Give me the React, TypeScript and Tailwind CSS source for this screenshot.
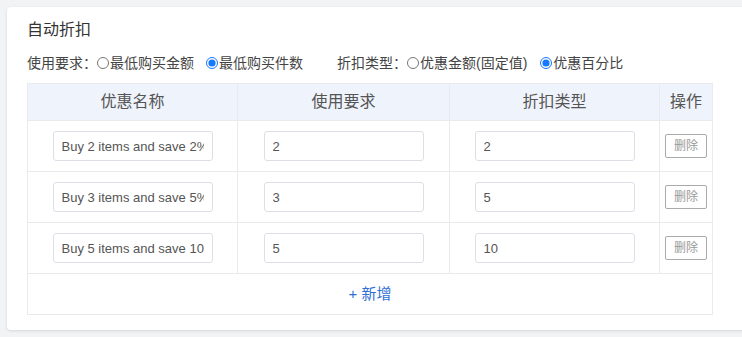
import React, { useState } from "react";

interface Rule {
  name: string;
  need: string;
  value: string;
}

const FONT = "font-['Liberation_Sans','Noto_Sans_CJK_SC',sans-serif]";

function Radio({
  checked,
  label,
  onClick,
}: {
  checked: boolean;
  label: string;
  onClick: () => void;
}) {
  return (
    <label className="flex items-center cursor-pointer" onClick={onClick}>
      <input
        type="radio"
        checked={checked}
        readOnly
        className="m-0 mr-px h-[12px] w-[12px] accent-[#1677ff]"
      />
      <span>{label}</span>
    </label>
  );
}

export default function App() {
  const [requireType, setRequireType] = useState("count");
  const [discountType, setDiscountType] = useState("percent");
  const [rules] = useState<Rule[]>([
    { name: "Buy 2 items and save 2%", need: "2", value: "2" },
    { name: "Buy 3 items and save 5%", need: "3", value: "5" },
    { name: "Buy 5 items and save 10%", need: "5", value: "10" },
  ]);

  const inputCls =
    "h-[30px] w-[160px] rounded-[3px] border border-[#dcdfe6] bg-white px-[8px] text-[13px] text-[#555] outline-none";

  return (
    <div
      className={`h-[337px] w-[742px] overflow-hidden bg-[#f2f3f5] pl-[7px] pt-[7px] ${FONT}`}
    >
      <div className="w-[760px] rounded-[4px] bg-white pb-[15px] pl-[20px] pt-[11px] shadow-[0_1px_3px_rgba(0,0,0,0.12)]">
        <h2 className="text-[16px] leading-[24px] text-[#333]">自动折扣</h2>

        <div className="mt-[11px] flex h-[20px] items-center text-[14px] text-[#444]">
          <span>使用要求：</span>
          <Radio
            checked={requireType === "amount"}
            label="最低购买金额"
            onClick={() => setRequireType("amount")}
          />
          <span className="w-[12px]" />
          <Radio
            checked={requireType === "count"}
            label="最低购买件数"
            onClick={() => setRequireType("count")}
          />
          <span className="ml-[34px]">折扣类型：</span>
          <Radio
            checked={discountType === "fixed"}
            label="优惠金额(固定值)"
            onClick={() => setDiscountType("fixed")}
          />
          <span className="w-[13px]" />
          <Radio
            checked={discountType === "percent"}
            label="优惠百分比"
            onClick={() => setDiscountType("percent")}
          />
        </div>

        <div className="mt-[10px] w-[686px] border border-[#e8eaee]">
          <div className="grid h-[36px] grid-cols-[210px_212px_210px_1fr] bg-[#eff3fb] text-[16px] text-[#555]">
            <div className="flex items-center justify-center border-r border-[#e8eaee]">优惠名称</div>
            <div className="flex items-center justify-center border-r border-[#e8eaee]">使用要求</div>
            <div className="flex items-center justify-center border-r border-[#e8eaee]">折扣类型</div>
            <div className="flex items-center justify-center">操作</div>
          </div>

          {rules.map((r, i) => (
            <div
              key={i}
              className="grid h-[51px] grid-cols-[210px_212px_210px_1fr] border-t border-[#e8eaee]"
            >
              <div className="flex items-center justify-center border-r border-[#e8eaee]">
                <input className={inputCls} defaultValue={r.name} />
              </div>
              <div className="flex items-center justify-center border-r border-[#e8eaee]">
                <input className={inputCls} defaultValue={r.need} />
              </div>
              <div className="flex items-center justify-center border-r border-[#e8eaee]">
                <input className={inputCls} defaultValue={r.value} />
              </div>
              <div className="flex items-center justify-center">
                <button className="h-[24px] w-[42px] rounded-[2px] border border-[#aaa] bg-white text-[12px] text-[#999]">
                  删除
                </button>
              </div>
            </div>
          ))}

          <div className="flex h-[41px] items-center justify-center border-t border-[#e8eaee] text-[15px] text-[#2f6fd6]">
            + 新增
          </div>
        </div>
      </div>
    </div>
  );
}
